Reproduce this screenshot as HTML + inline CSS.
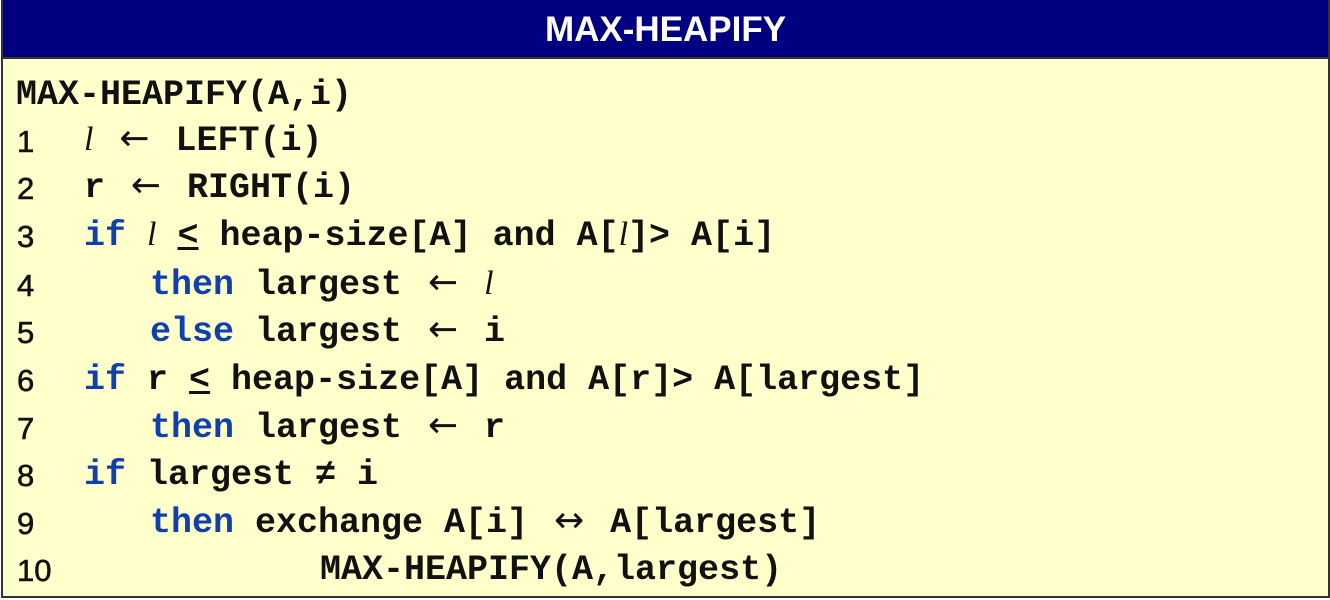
<!DOCTYPE html>
<html><head><style>
body{margin:0;width:1330px;height:600px;background:#fff;overflow:hidden;position:relative}
.box{position:absolute;left:1px;top:0;width:1325px;height:596px;border:2px solid #333;border-top:none;background:#FFFFCC}
.hd{position:absolute;left:0;top:0;width:1325px;height:57px;background:#000080;border-bottom:2px solid #333;color:#fff;font:bold 35px "Liberation Sans",sans-serif;text-align:center;line-height:60px}
.ln{position:absolute;left:17px;font:31px "Liberation Sans",sans-serif;color:#111;line-height:30px;-webkit-text-stroke:0.6px #111;margin-top:1px}
.c{position:absolute;font:bold 35px "Liberation Mono",monospace;color:#111;white-space:pre;line-height:36px}
.k{color:#1040B0}
.it{font:italic 34px "Liberation Serif",serif;line-height:0}
.a{font:36px "DejaVu Sans",sans-serif;display:inline-block;width:40px;text-align:center;line-height:0}
.u{text-decoration:underline}
</style></head><body>
<div class="box"><div class="hd">MAX-HEAPIFY</div></div>
<div class="c" style="left:16px;top:77px">MAX-HEAPIFY(A,i)</div>
<div class="ln" style="top:126px">1</div><div class="c" style="left:84px;top:123px"><span class="it">l</span> <span class="a">←</span> LEFT(i)</div>
<div class="ln" style="top:173px">2</div><div class="c" style="left:84px;top:170px">r <span class="a">←</span> RIGHT(i)</div>
<div class="ln" style="top:221px">3</div><div class="c" style="left:84px;top:218px"><span class="k">if</span> <span class="it">l</span> <span class="u">&lt;</span> heap-size[A] and A[<span class="it">l</span>]&gt; A[i]</div>
<div class="ln" style="top:270px">4</div><div class="c" style="left:150px;top:267px"><span class="k">then</span> largest <span class="a">←</span> <span class="it">l</span></div>
<div class="ln" style="top:317px">5</div><div class="c" style="left:150px;top:314px"><span class="k">else</span> largest <span class="a">←</span> i</div>
<div class="ln" style="top:365px">6</div><div class="c" style="left:84px;top:362px"><span class="k">if</span> r <span class="u">&lt;</span> heap-size[A] and A[r]&gt; A[largest]</div>
<div class="ln" style="top:413px">7</div><div class="c" style="left:150px;top:410px"><span class="k">then</span> largest <span class="a">←</span> r</div>
<div class="ln" style="top:460px">8</div><div class="c" style="left:84px;top:457px"><span class="k">if</span> largest ≠ i</div>
<div class="ln" style="top:508px">9</div><div class="c" style="left:150px;top:505px"><span class="k">then</span> exchange A[i] <span class="a">↔</span> A[largest]</div>
<div class="ln" style="top:555px">10</div><div class="c" style="left:320px;top:552px">MAX-HEAPIFY(A,largest)</div>
</body></html>
